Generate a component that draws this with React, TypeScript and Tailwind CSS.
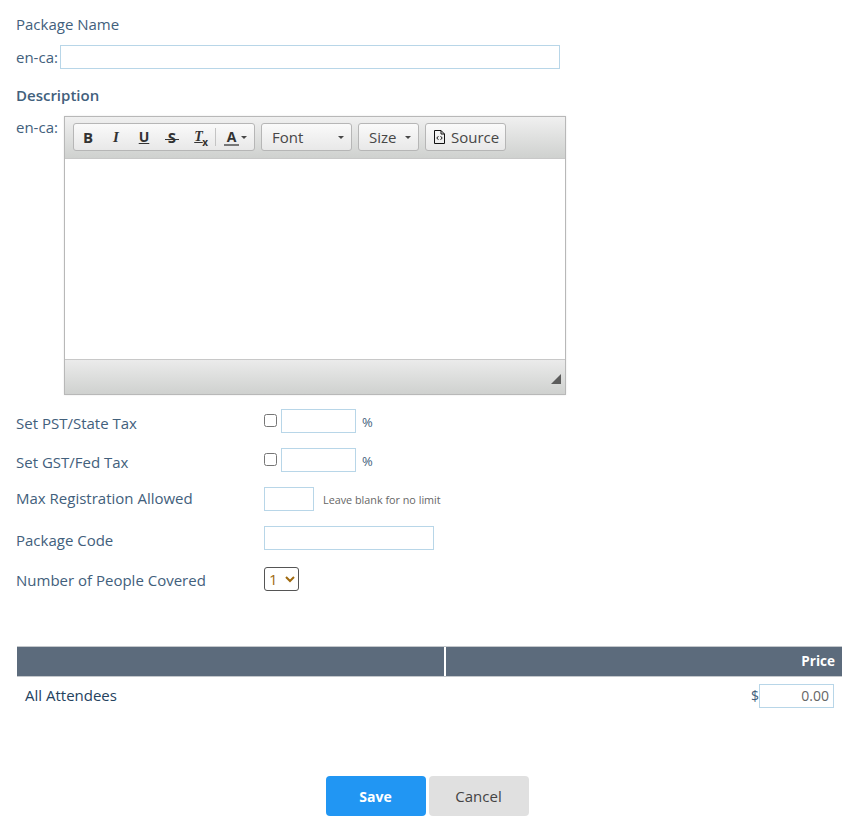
import React from 'react';

const inputCls = 'h-6 border border-[#b8d6e8] bg-white outline-none text-sm';

const Sep = () => <span className="ml-[1px] mr-[4px] h-[18px] w-px bg-[#c4c4c4]" />;

const ToolBtn = ({ children }: { children: React.ReactNode }) => (
  <span className="flex h-[26px] w-[28px] items-center justify-center">{children}</span>
);

const Combo = ({ label, width }: { label: string; width: string }) => (
  <div className={`flex h-7 items-center justify-between rounded-[3px] border border-[#b6b6b6] bg-gradient-to-b from-[#fafafa] to-[#e8e8e8] pl-[10px] pr-[7px] text-[15px] text-[#474747] ${width}`}>
    <span>{label}</span>
    <span className="h-0 w-0 border-x-[3px] border-t-[3px] border-x-transparent border-t-[#474747]" />
  </div>
);

const Toolbar = () => (
  <div className="flex h-[42px] items-start gap-[6px] border-b border-[#c8c8c8] bg-gradient-to-b from-[#f0f0f0] to-[#cfd1cf] px-[8px] pt-[6px]">
    <div className="flex h-7 w-[182px] items-center rounded-[3px] border border-[#b6b6b6] bg-gradient-to-b from-[#fafafa] to-[#e8e8e8] text-[#333]">
      <ToolBtn><span className="text-[15px] font-bold leading-none">B</span></ToolBtn>
      <ToolBtn><span className="text-[15px] font-bold italic leading-none" style={{ fontFamily: '"Liberation Serif", serif' }}>I</span></ToolBtn>
      <ToolBtn><span className="text-[14px] font-bold leading-none underline">U</span></ToolBtn>
      <ToolBtn>
        <span className="relative text-[15px] font-bold leading-none">
          S<span className="absolute left-[-3px] right-[-3px] top-[9px] h-[1px] bg-[#333]" />
        </span>
      </ToolBtn>
      <ToolBtn>
        <span className="relative -ml-[3px] text-[14px] font-bold italic leading-none underline" style={{ fontFamily: '"Liberation Serif", serif' }}>
          T<span className="absolute left-[8px] top-[7px] text-[10px] not-italic no-underline" style={{ fontFamily: '"Open Sans", sans-serif' }}>x</span>
        </span>
      </ToolBtn>
      <Sep />
      <span className="ml-[4px] flex flex-col items-center">
        <span className="text-[14px] font-bold leading-[15px]">A</span>
        <span className="h-[2px] w-[15px] bg-[#777]" />
      </span>
      <span className="ml-[2px] h-0 w-0 border-x-[3px] border-t-[3px] border-x-transparent border-t-[#474747]" />
    </div>
    <Combo label="Font" width="w-[91px]" />
    <Combo label="Size" width="w-[61px]" />
    <div className="flex h-7 w-[81px] items-center gap-[6px] rounded-[3px] border border-[#b6b6b6] bg-gradient-to-b from-[#fafafa] to-[#e8e8e8] pl-[8px] text-[15px] text-[#474747]">
      <svg width="11" height="14" viewBox="0 0 11 14" fill="none">
        <path d="M.5.5h6.5l3.5 3.5v9.5H.5z" stroke="#111" />
        <path d="M7 .5V4h3.5" stroke="#111" />
        <path d="M4.4 6.2 2.8 8l1.6 1.8M6.6 6.2 8.2 8 6.6 9.8" stroke="#111" />
      </svg>
      <span>Source</span>
    </div>
  </div>
);

const Editor = () => (
  <div className="ml-[7px] w-[502px] border border-[#b8b8b8] shadow-[0_0_2px_rgba(0,0,0,0.1)]">
    <Toolbar />
    <div className="h-[200px] bg-white" />
    <div className="flex h-[35px] items-end justify-end border-t border-[#c8c8c8] bg-gradient-to-b from-[#ebebeb] to-[#cfd1cf] pb-[10px] pr-[4px]">
      <svg width="10" height="10" viewBox="0 0 10 10">
        <path d="M10 0v10H0z" fill="#5c5c5c" />
      </svg>
    </div>
  </div>
);

const Row = ({ label, className, children }: { label: string; className: string; children: React.ReactNode }) => (
  <div className={`flex ${className}`}>
    <div className="w-[248px] leading-[19px]">{label}</div>
    <div className="flex items-start">{children}</div>
  </div>
);

const TaxInput = () => (
  <>
    <input type="checkbox" className="mt-[5px] h-[13px] w-[13px]" />
    <input className={`${inputCls} ml-[4px] w-[75px]`} />
    <span className="ml-[6px] mt-[4px] text-[13px] leading-[18px]">%</span>
  </>
);

export default function App() {
  return (
    <div className="min-h-screen bg-white text-[15px] text-[#42607c]" style={{ fontFamily: '"Open Sans", sans-serif' }}>
      <div className="px-4 pt-[15px]">
        <div className="leading-[19px]">Package Name</div>
        <div className="mt-[11px] flex items-center">
          <span className="w-[44px] shrink-0 whitespace-nowrap">en-ca:</span>
          <input className={`${inputCls} w-[500px]`} />
        </div>
        <div className="mt-[17px] font-semibold leading-[19px]">Description</div>
        <div className="mt-[11px] flex items-start">
          <span className="w-[41px] shrink-0 whitespace-nowrap pt-[2px] leading-[19px]">en-ca:</span>
          <Editor />
        </div>

        <Row label="Set PST/State Tax" className="mt-[14px] [&>div:first-child]:pt-[5px]">
          <TaxInput />
        </Row>
        <Row label="Set GST/Fed Tax" className="mt-[15px] [&>div:first-child]:pt-[5px]">
          <TaxInput />
        </Row>
        <Row label="Max Registration Allowed" className="mt-[15px] [&>div:first-child]:pt-[2px]">
          <input className={`${inputCls} w-[50px]`} />
          <span className="ml-[9px] mt-[5px] text-[10.8px] leading-[16px] text-[#666]">Leave blank for no limit</span>
        </Row>
        <Row label="Package Code" className="mt-[15px] [&>div:first-child]:pt-[5px]">
          <input className={`${inputCls} w-[170px]`} />
        </Row>
        <Row label="Number of People Covered" className="mt-[17px] [&>div:first-child]:pt-[4px]">
          <select className="h-6 w-[35px] rounded-[3px] border border-[#555] bg-white text-[15px] text-[#a06a10]">
            <option>1</option>
          </select>
        </Row>
      </div>

      <div className="ml-[17px] mt-[55px] w-[825px]">
        <div className="flex h-[31px] gap-[2px] border-y border-[#c4c8cc] bg-white">
          <div className="w-[427px] bg-[#5c6b7c]" />
          <div className="flex-1 bg-[#5c6b7c] pr-[7px] pt-[5px] text-right text-[13.5px] font-bold leading-[18px] text-white">Price</div>
        </div>
        <div className="flex h-[31px] items-center justify-between px-[8px] pt-[6px]">
          <span className="text-[#24425e]">All Attendees</span>
          <div className="flex items-center">
            <span className="text-[14px]">$</span>
            <input defaultValue="0.00" className={`${inputCls} w-[75px] pr-[4px] text-right text-[#666]`} />
          </div>
        </div>
      </div>

      <div className="mt-[68px] flex justify-center gap-[3px]">
        <button className="h-10 w-[100px] rounded-[4px] bg-[#2196f3] pt-[1px] text-sm font-bold text-white">Save</button>
        <button className="h-10 w-[100px] rounded-[4px] bg-[#e0e0e0] pt-[1px] text-[15px] text-[#444]">Cancel</button>
      </div>
    </div>
  );
}
